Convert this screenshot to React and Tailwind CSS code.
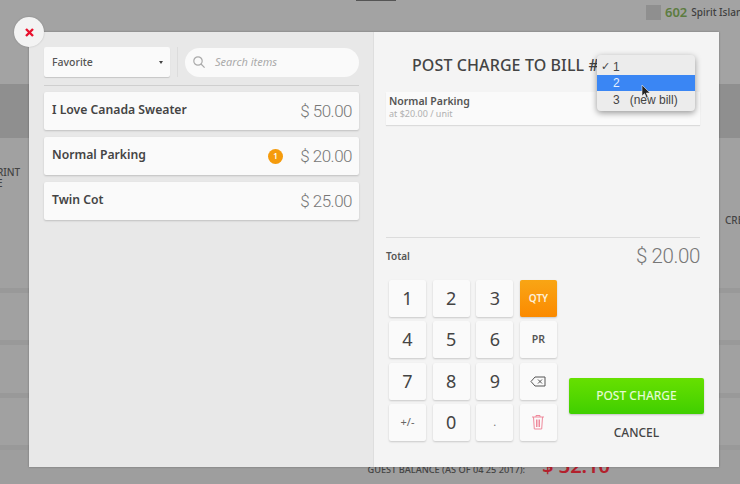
import React from "react";

function Row({ name, price, badge }) {
  return (
    <div className="flex items-center h-[38px] bg-[#fafafa] rounded-[2px] shadow-[0_1px_2px_rgba(0,0,0,0.18)] pl-[8px] pr-[7px]">
      <span className="text-[12.2px] font-semibold text-[#444] leading-none -mt-[2px]">{name}</span>
      <span className="flex-1" />
      {badge && (
        <span className="w-[15px] h-[15px] rounded-full bg-[#f59b0c] text-white text-[8px] font-semibold flex items-center justify-center mr-[17px]">
          {badge}
        </span>
      )}
      <span className="font-['Roboto',sans-serif] text-[17px] font-light tracking-[-0.5px] text-[#777] leading-none">{price}</span>
    </div>
  );
}

function Key({ children, className = "" }) {
  return (
    <div
      className={`w-[37px] h-[37px] rounded-[2px] bg-[#fafafa] shadow-[0_1px_2px_rgba(0,0,0,0.18)] flex items-center justify-center text-[#444] ${className}`}
    >
      {children}
    </div>
  );
}

export default function App() {
  return (
    <div className="relative w-[740px] h-[484px] overflow-hidden bg-[#a1a1a1] font-['Noto_Sans',sans-serif]">
      {/* page behind the dialog */}
      <div className="flex flex-col h-full">
        <div className="h-[84px] shrink-0 flex flex-col bg-[#a3a3a3]">
          <div className="h-px w-[40px] bg-[#555] ml-[356px]" />
          <div className="flex items-center gap-[4px] whitespace-nowrap ml-[646px] mt-[4px] h-[15px]">
            <div className="w-[15px] h-[15px] bg-[#8f8f8f] shrink-0" />
            <span className="text-[13px] font-semibold text-[#5c7c40] leading-none">602</span>
            <span className="text-[10px] font-medium text-[#3f3f3f]">Spirit Island</span>
          </div>
        </div>
        <div className="h-[54px] shrink-0 bg-[#8f8f8f]" />
        <div className="h-[100px] shrink-0 flex justify-between pt-[29px] text-[10px] font-medium text-[#444] leading-[11px] overflow-hidden">
          <span className="-ml-[3px]">RINT<br />E</span>
          <span className="mt-[48px] w-[15px] overflow-hidden">CRE</span>
        </div>
        <div className="h-[55px] shrink-0 border-b-[5px] border-[#999]" />
        <div className="h-[52px] shrink-0 border-b-[5px] border-[#999]" />
        <div className="h-[53px] shrink-0 border-b-[5px] border-[#999]" />
        <div className="h-[52px] shrink-0 border-b-[5px] border-[#999]" />
        <div className="flex items-baseline justify-end pr-[130px] pt-[6px] gap-[17px] whitespace-nowrap bg-[#9e9e9e] flex-1">
          <span className="text-[9.2px] font-medium text-[#444]">GUEST BALANCE (AS OF 04 25 2017):</span>
          <span className="text-[20px] font-semibold text-[#b3202c] leading-none">$ 32.10</span>
        </div>
      </div>

      {/* dialog */}
      <div className="absolute left-[29px] top-[32px] w-[690px] h-[435px] flex shadow-[0_0_2px_rgba(0,0,0,0.3)]">
        <div className="w-[344px] shrink-0 bg-[#e8e8e8] pl-[15px] pr-[14px] pt-[15px]">
          <div className="flex items-center h-[30px] gap-[7px]">
            <div className="w-[126px] h-[30px] bg-[#fafafa] rounded-[2px] shadow-[0_1px_1px_rgba(0,0,0,0.15)] flex items-center justify-between pl-[8px] pr-[7px]">
              <span className="text-[10.5px] font-medium text-[#555] pt-px">Favorite</span>
              <span className="w-0 h-0 border-l-[2.5px] border-r-[2.5px] border-t-[3px] border-l-transparent border-r-transparent border-t-[#444]" />
            </div>
            <div className="w-px h-[30px] bg-[#dcdcdc]" />
            <div className="w-[174px] h-[29px] bg-[#fafafa] rounded-full flex items-center pl-[7px]">
              <svg width="14" height="14" viewBox="0 0 14 14" fill="none" stroke="#aaa" strokeWidth="1.2">
                <circle cx="6" cy="6" r="4.2" />
                <path d="M9 9l3.6 3.6" />
              </svg>
              <span className="ml-[9px] text-[11px] italic text-[#aaa]">Search items</span>
            </div>
          </div>
          <div className="h-px bg-[#cfcfcf] mt-[8px] mb-[6px]" />
          <div className="flex flex-col gap-[7px]">
            <Row name="I Love Canada Sweater" price="$ 50.00" />
            <Row name="Normal Parking" price="$ 20.00" badge="1" />
            <Row name="Twin Cot" price="$ 25.00" />
          </div>
        </div>

        <div className="relative w-[346px] shrink-0 bg-[#f4f4f4] shadow-[inset_1px_0_0_#dedede] pl-[13px] pr-[19px] flex flex-col">
          <div className="h-[60px] shrink-0 pt-[22px] pl-[26px] text-[16px] font-medium text-[#444] leading-[22px] tracking-[0.1px] whitespace-nowrap">
            POST CHARGE TO BILL #
          </div>
          <div className="h-[33px] shrink-0 bg-[#fafafa] shadow-[0_1px_1px_rgba(0,0,0,0.1)] pl-[3px] pt-[3px]">
            <div className="text-[10.5px] font-semibold text-[#555] leading-[13px]">Normal Parking</div>
            <div className="text-[9px] text-[#b0b0b0] leading-[12px]">at $20.00 / unit</div>
          </div>
          <div className="h-px shrink-0 bg-[#dcdcdc] mt-[112px]" />
          <div className="flex items-center justify-between h-[36px] shrink-0">
            <span className="text-[10px] font-semibold text-[#555]">Total</span>
            <span className="font-['Roboto',sans-serif] text-[20.5px] font-light tracking-[-0.4px] text-[#777] leading-none">$ 20.00</span>
          </div>
          <div className="flex mt-[6px] pl-[3px]">
            <div className="grid grid-cols-[repeat(4,37px)] grid-rows-[repeat(4,37px)] gap-x-[6.67px] gap-y-[4.33px] shrink-0">
              {["1", "2", "3"].map((n) => (
                <Key key={n} className="text-[18px]">{n}</Key>
              ))}
              <Key className="!bg-gradient-to-b from-[#f9a514] to-[#fb8a00] !text-[#fdf0d8] text-[10px] font-semibold">QTY</Key>
              {["4", "5", "6"].map((n) => (
                <Key key={n} className="text-[18px]">{n}</Key>
              ))}
              <Key className="text-[10.5px] font-semibold text-[#555]">PR</Key>
              {["7", "8", "9"].map((n) => (
                <Key key={n} className="text-[18px]">{n}</Key>
              ))}
              <Key>
                <svg width="16" height="11" viewBox="0 0 16 11" fill="none" stroke="#555" strokeWidth="1">
                  <path d="M5 1h10v9H5L1 5.5z" />
                  <path d="M8 3.5l4 4M12 3.5l-4 4" />
                </svg>
              </Key>
              <Key className="text-[11px] text-[#666]">+/-</Key>
              <Key className="text-[18px]">0</Key>
              <Key className="text-[11px] text-[#777]">.</Key>
              <Key>
                <svg width="14" height="16" viewBox="0 0 14 16" fill="none" stroke="#ef8a9c" strokeWidth="1">
                  <path d="M1 3h12M5 3V1.5h4V3M2.5 3l.8 12h7.4l.8-12M5.5 5.5v7.5M7 5.5v7.5M8.5 5.5v7.5" />
                </svg>
              </Key>
            </div>
            <div className="ml-[12px] w-[135px] shrink-0 flex flex-col items-center pt-[98px]">
              <div className="w-[135px] h-[36px] rounded-[2px] bg-gradient-to-b from-[#66e000] to-[#3fcf00] shadow-[0_1px_2px_rgba(0,0,0,0.2)] flex items-center justify-center text-[12px] font-medium text-[#e2fbd0]">
                POST CHARGE
              </div>
              <div className="mt-[11px] text-[12px] font-medium text-[#444] leading-[16px]">CANCEL</div>
            </div>
          </div>

          {/* native select menu */}
          <div className="absolute left-[224px] top-[23px] w-[98px] h-[56px] bg-[#ececec] rounded-[4px] shadow-[0_2px_6px_rgba(0,0,0,0.4)] flex flex-col justify-center font-['Liberation_Sans',sans-serif] text-[12px] text-[#444]">
            <div className="h-[17px] flex items-center pl-[4px]">
              <span className="w-[12px] text-[11px]">✓</span>
              <span>1</span>
            </div>
            <div className="h-[16px] flex items-center pl-[16px] bg-[#3a86f4] text-[#e6f0ff]">2</div>
            <div className="h-[17px] flex items-center pl-[16px] whitespace-pre">3   (new bill)</div>
            <svg className="absolute left-[44px] top-[30px]" width="10" height="14" viewBox="0 0 10 14">
              <path d="M1 0v11l2.6-2.4L5.4 13l1.7-.8-1.8-4.2H9z" fill="#222" stroke="#eee" strokeWidth="0.6" />
            </svg>
          </div>
        </div>

        {/* close button */}
        <div className="absolute -left-[15px] -top-[15px] w-[30px] h-[30px] rounded-full bg-[#f3f3f3] shadow-[0_0_2px_rgba(0,0,0,0.2)] flex items-center justify-center">
          <svg width="9" height="9" viewBox="0 0 9 9" stroke="#e8112d" strokeWidth="2.4">
            <path d="M1 1l7 7M8 1l-7 7" />
          </svg>
        </div>
      </div>
    </div>
  );
}
